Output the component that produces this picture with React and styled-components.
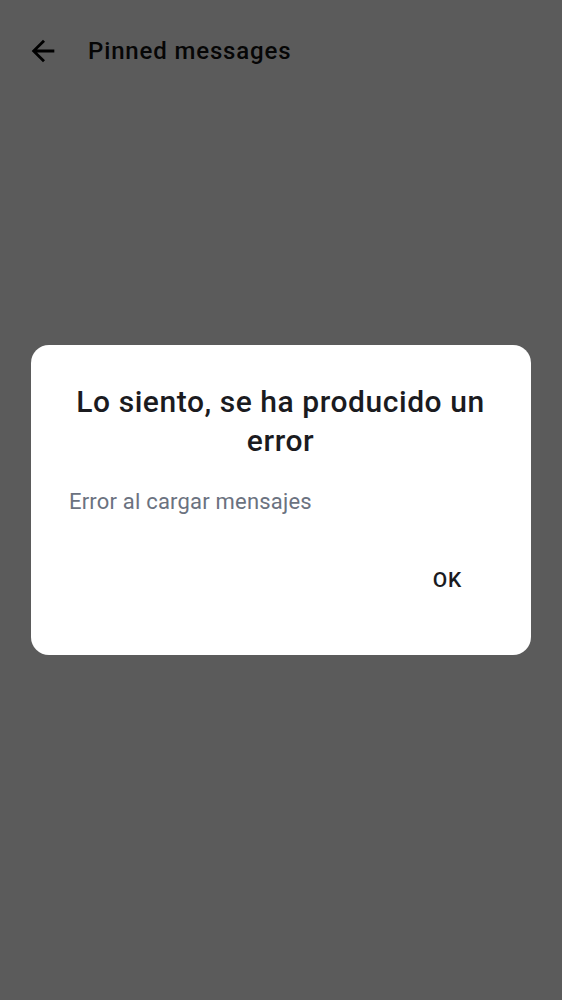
import React from "react";
import styled, { createGlobalStyle } from "styled-components";

const Global = createGlobalStyle`
  html, body { margin: 0; padding: 0; }
  body { font-family: Roboto, "Noto Sans", "Liberation Sans", sans-serif; background: #ffffff; }
  * { box-sizing: border-box; }
`;

const Page = styled.div`
  min-height: 1000px;
  background: #ffffff;
`;

const Header = styled.header`
  display: flex;
  align-items: center;
  height: 100px;
  padding: 1px 0 0 26px;
  gap: 28px;
`;

const IconButton = styled.button`
  display: flex;
  align-items: center;
  justify-content: center;
  width: 34px;
  height: 34px;
  padding: 0;
  border: none;
  background: transparent;
  color: #000;
`;

const Title = styled.h1`
  margin: 0;
  font-size: 24px;
  font-weight: 500;
  color: #111111;
  letter-spacing: 0.85px;
`;

const Scrim = styled.div`
  position: fixed;
  inset: 0;
  background: rgba(0, 0, 0, 0.642);
  display: flex;
  align-items: center;
  justify-content: center;
`;

const Dialog = styled.div`
  width: 500px;
  height: 310px;
  background: #ffffff;
  border-radius: 18px;
  padding: 37px 53px 0 38px;
  display: flex;
  flex-direction: column;
`;

const DialogTitle = styled.h2`
  margin: 0 -24px 0 -10px;
  font-size: 30px;
  line-height: 39px;
  font-weight: 500;
  text-align: center;
  color: #1b1b1f;
  letter-spacing: 0.55px;
`;

const Message = styled.p`
  margin: 28px 0 0 0;
  font-size: 22px;
  line-height: 28px;
  font-weight: 400;
  color: #6b7280;
  letter-spacing: 0.2px;
`;

const Actions = styled.div`
  display: flex;
  justify-content: flex-end;
  margin-top: 40px;
`;

const TextButton = styled.button`
  border: none;
  background: transparent;
  font-family: inherit;
  font-size: 21px;
  line-height: 28px;
  font-weight: 500;
  color: #1b1b1f;
  padding: 10px 16px;
  letter-spacing: 0.8px;
`;

export default function App() {
  return (
    <>
      <Global />
      <Page>
        <Header>
          <IconButton aria-label="Back">
            <svg width="34" height="34" viewBox="0 0 24 24" fill="currentColor">
              <path d="M20 11H7.83l5.59-5.59L12 4l-8 8 8 8 1.41-1.41L7.83 13H20v-2z" />
            </svg>
          </IconButton>
          <Title>Pinned messages</Title>
        </Header>
      </Page>
      <Scrim>
        <Dialog role="dialog">
          <DialogTitle>Lo siento, se ha producido un error</DialogTitle>
          <Message>Error al cargar mensajes</Message>
          <Actions>
            <TextButton>OK</TextButton>
          </Actions>
        </Dialog>
      </Scrim>
    </>
  );
}
